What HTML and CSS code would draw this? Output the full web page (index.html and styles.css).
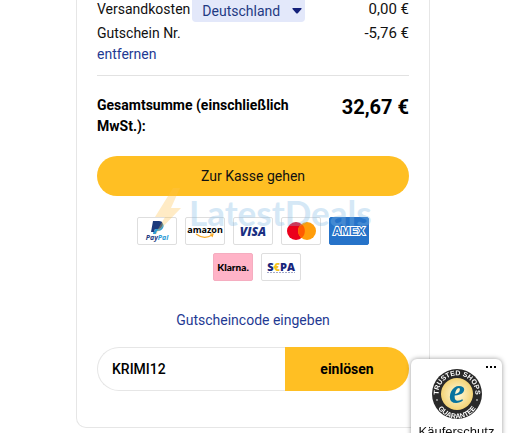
FILE: index.html
```html
<!DOCTYPE html>
<html lang="de">
<head>
<meta charset="utf-8">
<title>Warenkorb</title>
<link rel="stylesheet" href="styles.css">
</head>
<body>
<main class="summary">
  <div class="row shipping">
    <label for="country">Versandkosten</label>
    <span class="country">
      <select id="country"><option>Deutschland</option></select>
      <svg class="caret" viewBox="0 0 10 6" aria-hidden="true"><path d="M1 0h8q1 0 .5 1L6 5q-1 1-2 0L.5 1Q0 0 1 0z"/></svg>
    </span>
    <span class="amount">0,00 €</span>
  </div>
  <div class="row voucher">
    <div>Gutschein Nr.<br><a href="#">entfernen</a></div>
    <span class="amount">-5,76 €</span>
  </div>
  <div class="row total">
    <span class="total-label">Gesamtsumme (einschließlich MwSt.):</span>
    <strong class="amount total-amount">32,67 €</strong>
  </div>
  <div class="checkout">
    <button class="pay" type="button">Zur Kasse gehen</button>
    <div class="watermark">
      <svg class="bolt" viewBox="0 0 30 48" aria-hidden="true"><path d="M20 0 2 29h10L1 48 28 20H18L27 0z"/></svg>
      <span>LatestDeals</span>
    </div>
  </div>
  <div class="methods">
    <svg class="method" viewBox="0 0 38 26" role="img" aria-label="PayPal">
      <path fill="#2b9bd6" d="M24 5c2 1 2 3 1 5s-3 3-5 3h-1l-1 3h-3l.5-3h1l1-3h2c3 0 4-2 4.500-5z"/>
      <path fill="#1b3a7c" d="M15 3h6c4 0 4 3 3 5s-2 3-5 3h-2l-1 3h-3z"/>
      <text class="paypal" x="19" y="22" text-anchor="middle" fill="#253b80">Pay<tspan fill="#2b9bd6">Pal</tspan></text>
    </svg>
    <svg class="method" viewBox="0 0 38 26" role="img" aria-label="Amazon">
      <text class="amazon" x="19" y="15" text-anchor="middle">amazon</text>
      <path d="M10 16q8 6 16 1M24 16l3 0-1 3" fill="none" stroke="#f7a823" stroke-width="1.200"/>
    </svg>
    <svg class="method" viewBox="0 0 38 26" role="img" aria-label="Visa">
      <text class="visa" x="19" y="18" text-anchor="middle">VISA</text>
    </svg>
    <svg class="method" viewBox="0 0 38 26" role="img" aria-label="Mastercard">
      <circle cx="14" cy="13" r="9" fill="#eb001b"/><circle cx="25" cy="13" r="9" fill="#ff9d0a"/>
      <path d="M19.500 6a9 9 0 0 1 0 14 9 9 0 0 1 0-14z" fill="#ff5a00"/>
    </svg>
    <svg class="method amex" viewBox="0 0 38 26" role="img" aria-label="American Express">
      <text class="amex-text" x="19" y="17" text-anchor="middle">AMEX</text>
    </svg>
    <svg class="method klarna" viewBox="0 0 38 26" role="img" aria-label="Klarna">
      <text class="klarna-text" x="19" y="17" text-anchor="middle">Klarna.</text>
    </svg>
    <svg class="method" viewBox="0 0 38 26" role="img" aria-label="SEPA">
      <text class="sepa" x="19" y="17" text-anchor="middle">S<tspan fill="#f3c31d">€</tspan>PA</text>
      <path d="M5 18.500h28" stroke="#a3a9c8" stroke-dasharray="2 1"/>
    </svg>
  </div>
  <a class="code-link" href="#code">Gutscheincode eingeben</a>
  <form class="code">
    <input id="code" type="text" value="KRIMI12" aria-label="Gutscheincode">
    <button type="button">einlösen</button>
  </form>
</main>
<aside class="trust">
  <button class="more" type="button" aria-label="Mehr"><svg viewBox="0 0 10 2"><path d="M0 0h2v2H0zM4 0h2v2H4zM8 0h2v2H8z"/></svg></button>
  <svg class="seal" viewBox="0 0 50 50" role="img" aria-label="Trusted Shops Guarantee">
    <defs>
      <radialGradient id="gold"><stop offset="0" stop-color="#fffbe0"/><stop offset="1" stop-color="#f3d375"/></radialGradient>
      <path id="upper" d="M7 29a18.500 18.500 0 1 1 36 0"/>
      <path id="lower" d="M2.500 27a22.500 22.500 0 0 0 45 0"/>
    </defs>
    <circle cx="25" cy="25" r="25" fill="#292929"/>
    <circle cx="25" cy="25" r="16" fill="url(#gold)"/>
    <text class="ring"><textPath href="#upper" startOffset="50%" text-anchor="middle">TRUSTED SHOPS</textPath></text>
    <text class="ring"><textPath href="#lower" startOffset="50%" text-anchor="middle">GUARANTEE</textPath></text>
    <circle cx="5" cy="31" r=".8" fill="#fff"/><circle cx="45" cy="31" r=".8" fill="#fff"/>
    <text class="seal-e" x="25" y="34" text-anchor="middle">e</text>
  </svg>
  <span>Käuferschutz</span>
</aside>
</body>
</html>
```
FILE: styles.css
```css
* { box-sizing: border-box; }
body {
  margin: 0;
  overflow: hidden;
  background: #fff;
  color: #111;
  font: 14px/21px Roboto, sans-serif;
}
button, input, select { font: inherit; color: inherit; margin: 0; }
a { color: #1f3a93; text-decoration: none; }
.summary {
  margin: 0 93px 0 76px;
  padding: 0 20px 36px;
  border: 1px solid #e6e6e6;
  border-top: 0;
  border-radius: 0 0 10px 10px;
}
.row { display: flex; }
.amount { margin-left: auto; white-space: nowrap; font-size: 15px; }
.shipping { height: 22px; line-height: 18px; }
.country {
  position: relative;
  margin-left: 2px;
  width: 113px;
  height: 22px;
}
.country select {
  appearance: none;
  width: 100%;
  height: 100%;
  padding: 0 10px;
  border: 0;
  border-radius: 0 0 4px 4px;
  background: #e3e8fa;
  color: #1f3a83;
}
.caret {
  position: absolute;
  right: 3px;
  top: 8px;
  width: 10px;
  height: 6px;
  fill: #14207a;
}
.voucher { padding: 1px 0 10px; border-bottom: 1px solid #e2e2e2; }
.total { padding: 19px 0; color: #000; }
.total-label { width: 210px; font-weight: 700; }
.total-amount { font-size: 20px; line-height: 24px; }
.checkout { position: relative; }
.pay, .code button { border: 0; background: #ffbf23; cursor: pointer; }
.pay { width: 100%; height: 40px; border-radius: 20px; display: block; }
.watermark {
  position: absolute;
  left: 56px;
  top: 32px;
  display: flex;
  align-items: center;
  color: #80b9e5;
  opacity: .32;
  font: 700 35px/48px Lato, sans-serif;
  pointer-events: none;
}
.bolt { width: 30px; height: 48px; margin-right: 6px; fill: #ffc44d; }
.methods {
  display: flex;
  flex-wrap: wrap;
  justify-content: center;
  gap: 8px;
  padding: 21px 36px 29px;
}
.method {
  width: 40px;
  height: 28px;
  border: 1px solid #dedede;
  border-radius: 2px;
}
.amex { background: #2673c9; border-color: #2673c9; }
.klarna { margin-left: 8px; background: #ffb3c7; border-color: #f5adc0; }
.paypal { font: italic 700 7px "Open Sans", sans-serif; }
.amazon { font: 700 9px "Open Sans", sans-serif; }
.visa { font: italic 800 12px "Open Sans", sans-serif; fill: #1a2f82; }
.amex-text { font: 700 11px "Liberation Sans", sans-serif; fill: #2673c9; stroke: #fff; stroke-width: 2px; paint-order: stroke; }
.klarna-text { font: 900 10px Lato, sans-serif; }
.sepa { font: 800 11px "Open Sans", sans-serif; fill: #17267c; }
.code-link { display: block; text-align: center; }
.code { display: flex; height: 44px; margin-top: 16px; color: #000; }
.code input {
  flex: 1;
  min-width: 0;
  padding: 0 14px;
  border: 1px solid #e6e6e6;
  border-right: 0;
  border-radius: 22px 0 0 22px;
  background: #fff;
  font-weight: 500;
}
.code button { width: 124px; border-radius: 0 22px 22px 0; font-weight: 700; }
.trust {
  position: fixed;
  right: 21px;
  top: 359px;
  width: 91px;
  padding: 10px 0;
  display: flex;
  flex-direction: column;
  align-items: center;
  gap: 5px;
  border-radius: 6px;
  background: #fff;
  box-shadow: 0 0 5px #0006;
  color: #111;
  font: 13px/16px "Liberation Sans", sans-serif;
}
.more { position: absolute; right: 6px; top: 5px; padding: 0; border: 0; background: none; line-height: 0; }
.more svg { width: 10px; height: 2px; }
.seal { width: 50px; height: 50px; }
.ring { font: 700 7px "Liberation Sans", sans-serif; fill: #fff; }
.seal-e { font: italic 700 36px "Liberation Serif", serif; fill: #08749f; }
```
